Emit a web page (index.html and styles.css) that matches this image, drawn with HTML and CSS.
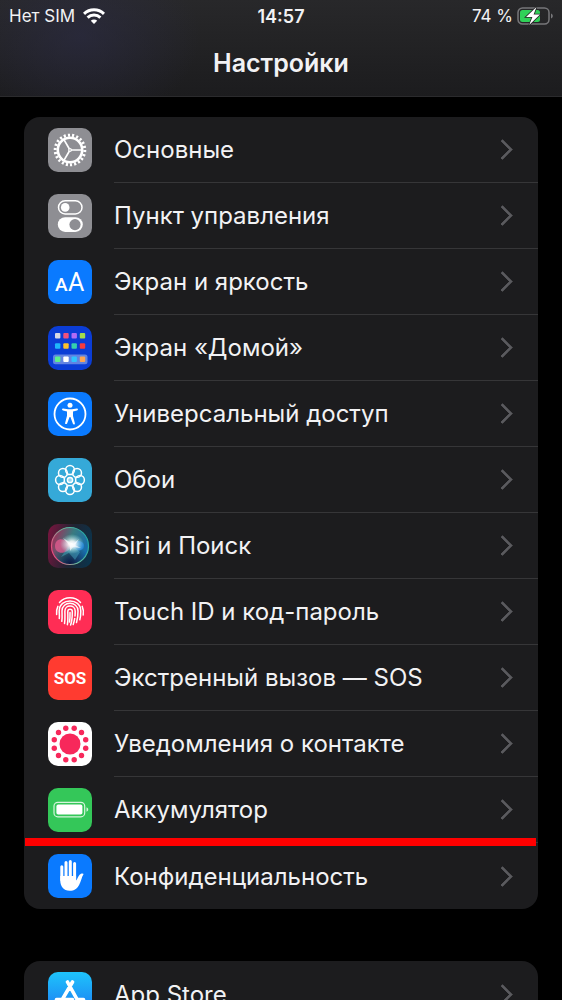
FILE: index.html
```html
<!DOCTYPE html>
<html lang="ru">
<head>
    <meta charset="UTF-8">
    <meta name="viewport" content="width=device-width, initial-scale=1.0">
    <title>Настройки</title>
    <link rel="stylesheet" href="styles.css">
</head>
<body>
    <div class="screen">
        <header class="header">
            <div class="status-bar">
                <div class="status-left">
                    <span>Нет SIM</span>
                    <svg class="wifi" viewBox="0 0 22 16" fill="none" stroke="#fff" stroke-width="3">
                        <path d="M1 5.8a14.4 14.4 0 0 1 20 0"/>
                        <path d="M4.6 9.6a9.2 9.2 0 0 1 12.8 0"/>
                        <path d="M11 16l-3.2-3.3a4.6 4.6 0 0 1 6.4 0z" fill="#fff" stroke="none"/>
                    </svg>
                </div>
                <time class="clock">14:57</time>
                <div class="status-right">
                    <span>74 %</span>
                    <svg class="battery" viewBox="0 0 36 18">
                        <rect x="1" y="1" width="31" height="16" rx="4.5" fill="none" stroke="#77777a" stroke-width="1.5"/>
                        <path d="M34 6.5c2.4.8 2.4 4.2 0 5z" fill="#77777a"/>
                        <rect x="3" y="3" width="20" height="12" rx="2.5" fill="#30d158"/>
                        <path d="M19.5 0L9 10h6.4l-3.2 8L23 7.6h-6.4z" fill="#fff" stroke="#262628" stroke-width="1.6" paint-order="stroke"/>
                    </svg>
                </div>
            </div>
            <h1>Настройки</h1>
        </header>

        <main class="content">
            <ul class="group">
                <li><a class="row" href="#general">
                    <svg class="icon gray" viewBox="0 0 44 44" fill="none" stroke="#fff">
                        <circle cx="22" cy="22" r="14.8" stroke-width="3" pathLength="88" stroke-dasharray="2 2"/>
                        <circle cx="22" cy="22" r="12.2" stroke-width="2.6"/>
                        <path d="M23 22h11M21.4 21l-5.6-9.6M21.4 23l-5.6 9.6" stroke-width="1.7"/>
                        <circle cx="22" cy="22" r="1.3" stroke-width="1.2"/>
                    </svg>
                    <span class="label">Основные</span>
                </a></li>
                <li><a class="row" href="#control">
                    <svg class="icon gray" viewBox="0 0 44 44">
                        <rect x="10.5" y="6.8" width="23.5" height="13.2" rx="6.6" fill="none" stroke="#fff" stroke-width="1.5"/>
                        <circle cx="17.2" cy="13.4" r="4.3" fill="#fff"/>
                        <rect x="9.8" y="23.2" width="25" height="14.8" rx="7.4" fill="#fff"/>
                        <circle cx="27" cy="30.6" r="5.6" fill="#8e8e93"/>
                    </svg>
                    <span class="label">Пункт управления</span>
                </a></li>
                <li><a class="row" href="#display">
                    <svg class="icon blue" viewBox="0 0 44 44" fill="#fff">
                        <text class="letter-small" x="7" y="31">A</text>
                        <text class="letter-big" x="20" y="31">A</text>
                    </svg>
                    <span class="label">Экран и яркость</span>
                </a></li>
                <li><a class="row" href="#home">
                    <svg class="icon home" viewBox="0 0 44 44">
                        <rect x="5" y="28.5" width="34.5" height="9.7" rx="2.5" fill="#6284e2"/>
                        <rect x="7" y="7" width="5.4" height="5.4" rx="1" fill="#d8d8e4"/>
                        <rect x="15.3" y="7" width="5.4" height="5.4" rx="1" fill="#f0517c"/>
                        <rect x="23.5" y="7" width="5.4" height="5.4" rx="1" fill="#b26bf5"/>
                        <rect x="31.8" y="7" width="5.4" height="5.4" rx="1" fill="#a4dc4c"/>
                        <rect x="7" y="17.3" width="5.4" height="5.4" rx="1" fill="#1fb6fb"/>
                        <rect x="15.3" y="17.3" width="5.4" height="5.4" rx="1" fill="#fcc02e"/>
                        <rect x="23.5" y="17.3" width="5.4" height="5.4" rx="1" fill="#35d0ae"/>
                        <rect x="31.8" y="17.3" width="5.4" height="5.4" rx="1" fill="#f53b3d"/>
                        <rect x="7" y="30.6" width="5.4" height="5.4" rx="1" fill="#5ef08a"/>
                        <rect x="15.3" y="30.6" width="5.4" height="5.4" rx="1" fill="#fff"/>
                        <rect x="23.5" y="30.6" width="5.4" height="5.4" rx="1" fill="#2fc3ff"/>
                        <rect x="31.8" y="30.6" width="5.4" height="5.4" rx="1" fill="#ffa552"/>
                    </svg>
                    <span class="label">Экран «Домой»</span>
                </a></li>
                <li><a class="row" href="#accessibility">
                    <svg class="icon blue" viewBox="0 0 44 44">
                        <circle cx="22" cy="22" r="15.5" fill="none" stroke="#fff" stroke-width="1.8"/>
                        <circle cx="22" cy="13.2" r="2.5" fill="#fff"/>
                        <path d="M15 16.6l5 .7h4l5-.7c1.300 0 1.300 1.800 0 2l-4 .8v4.600l1.900 7.200c.2 1.300-1.500 1.700-2 .5L22.400 25h-.8l-2.500 6.400c-.5 1.200-2.200.8-2-.5l1.900-7.200v-4.300l-4-.8c-1.300-.2-1.300-2 0-2z" fill="#fff"/>
                    </svg>
                    <span class="label">Универсальный доступ</span>
                </a></li>
                <li><a class="row" href="#wallpaper">
                    <svg class="icon cyan" viewBox="0 0 44 44" fill="none" stroke="#fff" stroke-width="1.5">
                        <circle cx="22" cy="12" r="4.4"/>
                        <circle cx="29.1" cy="14.9" r="4.4"/>
                        <circle cx="32" cy="22" r="4.4"/>
                        <circle cx="29.1" cy="29.1" r="4.4"/>
                        <circle cx="22" cy="32" r="4.4"/>
                        <circle cx="14.9" cy="29.1" r="4.4"/>
                        <circle cx="12" cy="22" r="4.4"/>
                        <circle cx="14.9" cy="14.9" r="4.4"/>
                        <circle cx="22" cy="22" r="2.6" fill="#9ad8ef"/>
                        <circle cx="22" cy="22" r="5.6" stroke-width="1"/>
                    </svg>
                    <span class="label">Обои</span>
                </a></li>
                <li><a class="row" href="#siri">
                    <svg class="icon" viewBox="0 0 44 44">
                        <defs>
                            <linearGradient id="siri-bg" x1="0" y1="0.4" x2="1" y2="0.6">
                                <stop offset="0" stop-color="#70163d"/>
                                <stop offset="0.5" stop-color="#202432"/>
                                <stop offset="1" stop-color="#0b334b"/>
                            </linearGradient>
                            <linearGradient id="siri-orb" x1="0" y1="0.3" x2="1" y2="0.7">
                                <stop offset="0" stop-color="#a02d58"/>
                                <stop offset="0.45" stop-color="#397b80"/>
                                <stop offset="1" stop-color="#116cb6"/>
                            </linearGradient>
                            <linearGradient id="siri-ring" x1="0" y1="0.7" x2="1" y2="0.3">
                                <stop offset="0" stop-color="#f0427c"/>
                                <stop offset="0.5" stop-color="#69bd9c"/>
                                <stop offset="1" stop-color="#20a5a5"/>
                            </linearGradient>
                            <radialGradient id="siri-shade" cx="0.5" cy="1" r="0.55">
                                <stop offset="0" stop-color="#09143e"/>
                                <stop offset="1" stop-color="#09143e" stop-opacity="0"/>
                            </radialGradient>
                            <radialGradient id="siri-glow">
                                <stop offset="0" stop-color="#fff"/>
                                <stop offset="0.3" stop-color="#fff" stop-opacity="0.85"/>
                                <stop offset="1" stop-color="#9de8e6" stop-opacity="0"/>
                            </radialGradient>
                        </defs>
                        <rect width="44" height="44" fill="url(#siri-bg)"/>
                        <circle cx="22" cy="22" r="18.5" fill="url(#siri-orb)"/>
                        <circle cx="22" cy="22" r="18.5" fill="url(#siri-shade)"/>
                        <path d="M24 22c-5 9-17 9-17 0s11-9 17 0z" fill="#f05a91" opacity="0.7"/>
                        <path d="M22 21c5-6 14-5 14 1s-9 6-14-1z" fill="#278be8" opacity="0.7"/>
                        <path d="M24 21l8 7-5 8-6-7-8 4 7-10z" fill="#52bdd4" opacity="0.4"/>
                        <ellipse cx="24" cy="20" rx="12" ry="10" fill="url(#siri-glow)"/>
                        <path d="M15 14l10 6 6-5-4 6 6 3-8-1-3 4v-5z" fill="#fff" opacity="0.6"/>
                        <circle cx="22" cy="22" r="18.5" fill="none" stroke="url(#siri-ring)" stroke-width="1.2"/>
                    </svg>
                    <span class="label">Siri и Поиск</span>
                </a></li>
                <li><a class="row" href="#touch-id">
                    <svg class="icon pink" viewBox="0 0 44 44" fill="none" stroke="#fff" stroke-width="1.5" stroke-linecap="round">
                        <path d="M11.5 12.5c5.5-6.2 15.5-6.2 21 0"/>
                        <path d="M8.600 24.500c-.4-3 .1-5.800 1.300-8.200M34.200 16.400c1.200 2.600 1.500 5.300 1 8.600"/>
                        <path d="M11.300 28.500c.3-3-.1-4.700-.1-7.500 0-13.500 21.600-13.500 21.600 0 0 3.400-.2 6-1 8.800"/>
                        <path d="M13.800 31.300c.6-3.600.2-6.900.2-10.300 0-10.200 16-10.200 16 0 0 4-.3 7.700-1.500 11.500"/>
                        <path d="M16.500 33.500c.8-4.200.4-8.200.4-12.300 0-6.800 10.300-6.800 10.300 0 0 1.600 0 3.200-.2 4.800M26.700 28.500c-.3 2-.8 4-1.500 6"/>
                        <path d="M19.400 34.700c.8-4.400.4-8.900.4-13.300 0-2.900 4.500-2.900 4.500 0 0 4.700 0 9-1.700 13.700"/>
                        <path d="M22 22.500c.1 3.500 0 6.500-.5 9.500"/>
                    </svg>
                    <span class="label">Touch ID и код-пароль</span>
                </a></li>
                <li><a class="row" href="#sos">
                    <svg class="icon red" viewBox="0 0 44 44" fill="#fff">
                        <text class="sos" x="22" y="28" text-anchor="middle">SOS</text>
                    </svg>
                    <span class="label">Экстренный вызов — SOS</span>
                </a></li>
                <li><a class="row" href="#exposure">
                    <svg class="icon white" viewBox="0 0 44 44" fill="#f7285b">
                        <circle cx="22" cy="22" r="10.5"/>
                        <circle cx="26.2" cy="6.300" r="2.700"/>
                        <circle cx="33.500" cy="10.500" r="2.700"/>
                        <circle cx="37.700" cy="17.800" r="2.700"/>
                        <circle cx="37.700" cy="26.200" r="2.700"/>
                        <circle cx="33.500" cy="33.500" r="2.700"/>
                        <circle cx="26.200" cy="37.700" r="2.700"/>
                        <circle cx="17.800" cy="37.700" r="2.700"/>
                        <circle cx="10.500" cy="33.500" r="2.700"/>
                        <circle cx="6.300" cy="26.200" r="2.700"/>
                        <circle cx="6.300" cy="17.800" r="2.700"/>
                        <circle cx="10.500" cy="10.500" r="2.700"/>
                        <circle cx="17.800" cy="6.300" r="2.700"/>
                    </svg>
                    <span class="label">Уведомления о контакте</span>
                </a></li>
                <li><a class="row marked" href="#battery">
                    <svg class="icon green" viewBox="0 0 44 44">
                        <rect x="6" y="14.3" width="30.7" height="14.5" rx="3.8" fill="none" stroke="#d5f5dc" stroke-width="1.2"/>
                        <rect x="8.4" y="16.6" width="26" height="9.9" rx="1.8" fill="#fff"/>
                        <path d="M38.5 19.3c2.3.8 2.3 3.7 0 4.5z" fill="#d5f5dc"/>
                    </svg>
                    <span class="label">Аккумулятор</span>
                </a></li>
                <li><a class="row" href="#privacy">
                    <svg class="icon blue" viewBox="0 0 44 44" fill="#fff" stroke="#fff" stroke-linecap="round">
                        <path d="M13.8 12.8V26M18 8.6V24M22.3 7.600V24M26.600 9.600V25" stroke-width="3"/>
                        <path d="M12.300 22h15.800v4.500c1.300-1.500 2.200-4.200 3.500-5.700 1.500-1.600 3.600-1.500 4-.8-2 3.300-2.600 7.500-4.500 11-2 3.800-4.800 5.800-9.400 5.800-6.200 0-9.400-4.400-9.400-10.300z" stroke="none"/>
                    </svg>
                    <span class="label">Конфиденциальность</span>
                </a></li>
            </ul>

            <ul class="group">
                <li><a class="row" href="#app-store">
                    <svg class="icon store" viewBox="0 0 44 44" fill="none" stroke="#fff" stroke-width="3.6" stroke-linecap="round">
                        <path d="M19.5 10L30.5 30M24.500 10L14 28M8.500 27.500h16M30 27.500h5.500M12 32l-1.500 2.500M32.500 32l1.500 2.500"/>
                    </svg>
                    <span class="label">App Store</span>
                </a></li>
            </ul>
        </main>
    </div>
</body>
</html>
```
FILE: styles.css
```css
* {
    box-sizing: border-box;
}
body {
    margin: 0;
    background: #000;
    color: #f2f2f4;
    font-family: Inter, Roboto, "Liberation Sans", sans-serif;
}
.screen {
    display: flex;
    flex-direction: column;
    height: 100vh;
    overflow: hidden;
}
.header {
    flex: none;
    padding-bottom: 16px;
    border-bottom: 1px solid #2b2b2d;
    background:
        radial-gradient(ellipse 120px 90px at 80px 36px, rgba(44, 44, 70, 0.6), transparent),
        linear-gradient(#28282a, #1c1c1e);
}
.status-bar {
    display: grid;
    grid-template-columns: 1fr auto 1fr;
    align-items: center;
    height: 32px;
    padding: 0 9px;
    font-size: 17px;
}
.status-left,
.status-right {
    display: flex;
    align-items: center;
    gap: 8px;
}
.status-right {
    justify-content: flex-end;
    gap: 4px;
}
.wifi {
    width: 22px;
    height: 16px;
}
.battery {
    width: 36px;
    height: 18px;
}
.clock {
    font-size: 18px;
    font-weight: 600;
}
h1 {
    margin: 15px 0 1px;
    font-size: 25px;
    line-height: 32px;
    font-weight: 600;
    text-align: center;
}

/* список */
.content {
    flex: 1;
    min-height: 0;
    padding: 20px 24px;
    overflow-y: auto;
    scrollbar-width: none;
}
.group {
    margin: 0 0 52px;
    padding: 0;
    list-style: none;
    background: #1c1c1e;
    border-radius: 16px;
}
.row {
    position: relative;
    display: flex;
    align-items: center;
    gap: 22px;
    height: 66px;
    padding-left: 24px;
    color: inherit;
    text-decoration: none;
}
.label {
    display: flex;
    flex: 1;
    align-items: center;
    justify-content: space-between;
    height: 100%;
    padding-right: 28px;
    border-bottom: 1px solid #363638;
    font-size: 24px;
}
li:last-child .label {
    border-bottom: 0;
}
/* стрелка справа */
.label::after {
    content: "";
    width: 12px;
    height: 12px;
    border: solid #5a5a5e;
    border-width: 3px 3px 0 0;
    border-radius: 1px;
    transform: rotate(45deg);
}
.marked::after {
    content: "";
    position: absolute;
    right: 2px;
    bottom: -3px;
    left: 1px;
    z-index: 1;
    height: 8px;
    background: #fe0000;
}

/* иконки */
.icon {
    flex: none;
    width: 44px;
    height: 44px;
    border-radius: 10px;
}
.gray {
    background: #8e8e93;
}
.blue {
    background: #0a7aff;
}
.home {
    background: #0b3dd6;
}
.cyan {
    background: #35a9d8;
}
.pink {
    background: #ff2d55;
}
.red {
    background: #ff3b30;
}
.white {
    background: #fff;
}
.green {
    background: #34c759;
}
.store {
    background: linear-gradient(#1ec4fb, #1d75f2);
}
.letter-small,
.letter-big {
    font-family: Roboto, sans-serif;
    font-size: 19px;
    font-weight: 500;
}
.letter-big {
    font-size: 25px;
    font-weight: 400;
}
.sos {
    font-family: Roboto, sans-serif;
    font-size: 17px;
    font-weight: 700;
}
```
